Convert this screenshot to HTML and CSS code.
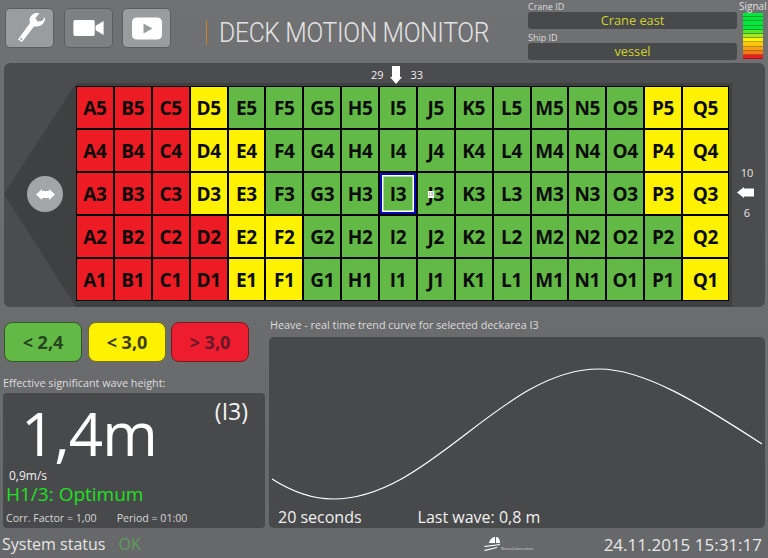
FILE: index.html
```html
<!DOCTYPE html>
<html lang="en">
<head>
    <meta charset="UTF-8">
    <title>Deck Motion Monitor</title>
    <link rel="stylesheet" href="styles.css">
</head>
<body>

    <header class="header">
        <div class="tool-buttons">
            <div class="tool-button">
                <svg width="36" height="36" viewBox="0 0 36 36"><path d="M10 32 L6 29.5 L18 13 C16.5 8.5 19 4 24 3 L27.5 3.2 L23.5 8 L25.5 11.5 L30 11 L33 7 C33.5 12 30 16.5 24.5 16.5 L22 16.5 Z" fill="#fff"/><circle cx="9.3" cy="29" r="1" fill="#9b9c9e"/></svg>
            </div>
            <div class="tool-button dark">
                <svg width="31" height="16" viewBox="1 2 34 18"><path d="M3 2 H23 Q25 2 25 4 V18 Q25 20 23 20 H3 Q1 20 1 18 V4 Q1 2 3 2 Z M26 8.5 L35 3 V19 L26 13.5 Z" fill="#fff"/></svg>
            </div>
            <div class="tool-button">
                <svg width="30" height="23" viewBox="1 1 30 22"><path fill-rule="evenodd" d="M6 1 H26 Q31 1 31 6 V18 Q31 23 26 23 H6 Q1 23 1 18 V6 Q1 1 6 1 Z M12.5 7 V17 L21.5 12 Z" fill="#fff"/></svg>
            </div>
        </div>
        <h1 class="title"><span class="title-text">DECK MOTION MONITOR</span></h1>
        <div class="ids">
            <div class="id-label">Crane ID</div>
            <div class="id-value">Crane east</div>
            <div class="id-label">Ship ID</div>
            <div class="id-value">vessel</div>
        </div>
        <div class="signal">
            <div class="signal-label">Signal</div>
            <div class="signal-bar">
                <span class="s1"></span><span class="s1"></span><span class="s1"></span><span class="s1"></span>
                <span class="s2"></span><span class="s3"></span><span class="s4"></span><span class="s5"></span>
                <span class="s6"></span><span class="s7"></span><span class="s8"></span>
            </div>
        </div>
    </header>

    <section class="board">
        <svg class="board-shape" width="730" height="244" viewBox="0 0 730 244"><path d="M0 131 L72 20 H728 V244 H72 Z" fill="#3f4042"/></svg>
        <div class="flip-col">
            <div class="flip-button">
                <svg width="19" height="11" viewBox="0 0 19 11"><path d="M0 5.5 L6 0 V2 H13 V0 L19 5.5 L13 11 V9 H6 V11 Z" fill="#fff"/></svg>
            </div>
        </div>
        <div class="deck-col">
            <div class="top-marker">
                <span>29</span>
                <svg width="12" height="18" viewBox="0 0 12 18"><path d="M2 0 H10 V11 H12 L6 18 L0 11 H2 Z" fill="#fff"/></svg>
                <span class="top-marker-end">33</span>
            </div>
            <div class="deck">
                <div class="cell r">A5</div><div class="cell r">B5</div><div class="cell r">C5</div><div class="cell y">D5</div><div class="cell g">E5</div><div class="cell g">F5</div><div class="cell g">G5</div><div class="cell g">H5</div><div class="cell g">I5</div><div class="cell g">J5</div><div class="cell g">K5</div><div class="cell g">L5</div><div class="cell g">M5</div><div class="cell g">N5</div><div class="cell g">O5</div><div class="cell y">P5</div><div class="cell y">Q5</div>
                <div class="cell r">A4</div><div class="cell r">B4</div><div class="cell r">C4</div><div class="cell y">D4</div><div class="cell y">E4</div><div class="cell g">F4</div><div class="cell g">G4</div><div class="cell g">H4</div><div class="cell g">I4</div><div class="cell g">J4</div><div class="cell g">K4</div><div class="cell g">L4</div><div class="cell g">M4</div><div class="cell g">N4</div><div class="cell g">O4</div><div class="cell y">P4</div><div class="cell y">Q4</div>
                <div class="cell r">A3</div><div class="cell r">B3</div><div class="cell r">C3</div><div class="cell y">D3</div><div class="cell y">E3</div><div class="cell g">F3</div><div class="cell g">G3</div><div class="cell g">H3</div><div class="cell g selected">I3</div><div class="cell g">J3<span class="chip">I3</span></div><div class="cell g">K3</div><div class="cell g">L3</div><div class="cell g">M3</div><div class="cell g">N3</div><div class="cell g">O3</div><div class="cell y">P3</div><div class="cell y">Q3</div>
                <div class="cell r">A2</div><div class="cell r">B2</div><div class="cell r">C2</div><div class="cell r">D2</div><div class="cell y">E2</div><div class="cell y">F2</div><div class="cell g">G2</div><div class="cell g">H2</div><div class="cell g">I2</div><div class="cell g">J2</div><div class="cell g">K2</div><div class="cell g">L2</div><div class="cell g">M2</div><div class="cell g">N2</div><div class="cell g">O2</div><div class="cell g">P2</div><div class="cell y">Q2</div>
                <div class="cell r">A1</div><div class="cell r">B1</div><div class="cell r">C1</div><div class="cell r">D1</div><div class="cell y">E1</div><div class="cell y">F1</div><div class="cell g">G1</div><div class="cell g">H1</div><div class="cell g">I1</div><div class="cell g">J1</div><div class="cell g">K1</div><div class="cell g">L1</div><div class="cell g">M1</div><div class="cell g">N1</div><div class="cell g">O1</div><div class="cell g">P1</div><div class="cell y">Q1</div>
            </div>
        </div>
        <div class="side-marker">
            <span>10</span>
            <svg class="side-arrow" width="17" height="11" viewBox="0 0 17 11"><path d="M0 5.5 L7 0 V1.5 H17 V9.5 H7 V11 Z" fill="#fff"/></svg>
            <span>6</span>
        </div>
    </section>

    <main class="lower">
        <div class="left-col">
            <div class="legend">
                <div class="legend-item green">&lt; 2,4</div>
                <div class="legend-item yellow">&lt; 3,0</div>
                <div class="legend-item red">&gt; 3,0</div>
            </div>
            <div class="caption wave-caption">Effective significant wave height:</div>
            <div class="wave-panel">
                <div class="wave-top">
                    <div class="wave-value">1,4m</div>
                    <div class="wave-area">(I3)</div>
                </div>
                <div class="wave-speed">0,9m/s</div>
                <div class="wave-state">H1/3: Optimum</div>
                <div class="wave-foot">
                    <span>Corr. Factor = 1,00</span>
                    <span>Period = 01:00</span>
                </div>
            </div>
        </div>
        <div class="right-col">
            <div class="caption chart-caption">Heave - real time trend curve for selected deckarea I3</div>
            <div class="chart">
                <svg class="chart-line" width="496" height="191" viewBox="0 0 496 191"><path d="M3 142 C22 154 42 162 64 162 C161 162 233 32 330 32 C375 32 430 66 493 107" fill="none" stroke="#fff" stroke-width="1.2"/></svg>
                <div class="chart-foot">
                    <span>20 seconds</span>
                    <span>Last wave: 0,8 m</span>
                </div>
            </div>
        </div>
    </main>

    <footer class="footer">
        <div class="status">System status <span class="status-ok">OK</span></div>
        <div class="logo">
            <svg width="17" height="16" viewBox="0 0 17 16"><path d="M5 7 C6 3 9 1 11 1 V7 Z M12 1 C15 1 16 4 16 7 H12 Z M0 10 L16 8 L16 9 L1 11 Z M0 14 L13 11 L13 12 L1 15 Z" fill="#fff"/></svg>
            <span>ShoreConnection</span>
        </div>
        <div class="clock">24.11.2015 15:31:17</div>
    </footer>

</body>
</html>
```

FILE: styles.css
```css
html, body {
    margin: 0;
    padding: 0;
}

body {
    width: 768px;
    height: 558px;
    overflow: hidden;
    font-family: 'Open Sans', sans-serif;
    color: #e6e6e6;
    background: linear-gradient(#707173, #67686a);
    display: flex;
    flex-direction: column;
}

/* header */
.header {
    height: 63px;
    display: flex;
    align-items: flex-start;
}

.tool-buttons {
    display: flex;
    gap: 9.5px;
    padding: 8px 0 0 5px;
    width: 201px;
    box-sizing: border-box;
}

.tool-button {
    width: 49px;
    height: 40px;
    background-color: #9b9c9e;
    border: 1px solid #5c5d5f;
    border-radius: 5px;
    box-sizing: border-box;
    display: flex;
    align-items: center;
    justify-content: center;
}

.tool-button.dark {
    background-color: #7f8082;
}

.title {
    margin: 20px 0 0 5px;
    padding-left: 12px;
    width: 304px;
    height: 25px;
    box-sizing: border-box;
    border-left: 1px solid #c8812f;
    font-family: 'Roboto', sans-serif;
    font-weight: 300;
    font-size: 28px;
    line-height: 25px;
    letter-spacing: -0.4px;
    color: #e4e4e4;
    white-space: nowrap;
}

.title-text {
    display: inline-block;
    transform: scaleX(0.885);
    transform-origin: left center;
}

.ids {
    width: 209px;
    margin-left: 18px;
    padding-top: 1px;
    flex-shrink: 0;
}

.id-label {
    font-size: 9px;
    line-height: 11px;
    color: #dcdcdc;
}

.id-value {
    height: 17px;
    line-height: 17px;
    margin-bottom: 3px;
    background-color: #48494b;
    border-radius: 3px;
    text-align: center;
    font-size: 12.8px;
    color: #d0d22c;
}

.signal {
    margin-left: 2px;
    width: 26px;
    flex-shrink: 0;
}

.signal-label {
    font-size: 10px;
    line-height: 12px;
    text-align: center;
    color: #e0e0e0;
}

.signal-bar {
    margin: 1px 2px 0 4px;
    display: flex;
    flex-direction: column;
    height: 46px;
}

.signal-bar span {
    flex: 1;
    border-bottom: 1px solid rgba(0, 0, 0, 0.3);
}

.s1 { background-color: #00e83c; }
.s2 { background-color: #55e62a; }
.s3 { background-color: #a8e61e; }
.s4 { background-color: #fff200; }
.s5 { background-color: #fdc60e; }
.s6 { background-color: #fb9e14; }
.s7 { background-color: #f67a18; }
.s8 { background-color: #ee1c24; }

/* deck board */
.board {
    position: relative;
    height: 244px;
    margin: 0 3px 0 4px;
    background-color: #4b4c4e;
    border-radius: 6px;
    display: flex;
    overflow: hidden;
}

.board-shape {
    position: absolute;
    left: 0;
    top: 0;
}

.flip-col {
    position: relative;
    width: 72px;
    padding: 113px 0 0 23px;
    box-sizing: border-box;
}

.flip-button {
    width: 36px;
    height: 36px;
    border-radius: 50%;
    background-color: #a4a5a8;
    display: flex;
    align-items: center;
    justify-content: center;
}

.deck-col {
    position: relative;
    width: 653px;
    display: flex;
    flex-direction: column;
}

.top-marker {
    height: 23px;
    padding-right: 11px;
    display: flex;
    align-items: center;
    justify-content: center;
    gap: 6px;
    font-size: 11px;
    color: #f0f0f0;
}

.top-marker-end {
    margin-left: 3px;
}

.deck {
    width: 653px;
    height: 215px;
    padding: 1px;
    box-sizing: border-box;
    background-color: #000;
    display: grid;
    grid-template-columns: repeat(16, 1fr) 45px;
    grid-template-rows: repeat(5, 1fr);
    gap: 2px;
}

.cell {
    position: relative;
    display: flex;
    align-items: center;
    justify-content: center;
    font-weight: 700;
    font-size: 19px;
    letter-spacing: -0.3px;
    color: #0b0b0b;
}

.cell.r { background-color: #ed1c24; }
.cell.y { background-color: #fff200; }
.cell.g { background-color: #62b945; }

.cell.selected {
    z-index: 1;
    box-sizing: border-box;
    border: 2px solid #0a0ab4;
    box-shadow: inset 0 0 0 1.5px #fff;
}

.chip {
    position: absolute;
    left: 10px;
    top: 18px;
    width: 6px;
    height: 7px;
    background-color: #fff;
    font-size: 5px;
    font-weight: 400;
    line-height: 7px;
    letter-spacing: 0;
    text-align: center;
    color: #555;
}

.side-marker {
    position: relative;
    flex: 1;
    padding-top: 102px;
    display: flex;
    flex-direction: column;
    align-items: center;
    font-size: 11px;
    line-height: 15px;
    gap: 7px;
    color: #e8e8e8;
}

.side-arrow {
    margin-right: 4px;
}

/* lower part */
.lower {
    flex: 1;
    display: flex;
    padding-left: 3px;
}

.left-col {
    width: 262px;
}

.legend {
    display: flex;
    gap: 6px;
    padding: 15px 0 0 1px;
}

.legend-item {
    width: 78px;
    height: 40px;
    box-sizing: border-box;
    border-radius: 8px;
    display: flex;
    align-items: center;
    justify-content: center;
    font-weight: 700;
    font-size: 18px;
}

.legend-item.green {
    background-color: #62b945;
    border: 1px solid #2f5a22;
    color: #27461f;
}

.legend-item.yellow {
    background-color: #fff200;
    border: 1px solid #75701a;
    margin-right: -1px;
    color: #3f3d14;
}

.legend-item.red {
    background-color: #ed1c2e;
    border: 1px solid #7a1a20;
    color: #641a26;
}

.caption {
    font-size: 10.8px;
    line-height: 14px;
    color: #dedede;
}

.wave-caption {
    margin-top: 14px;
    height: 17px;
}

.wave-panel {
    height: 135px;
    box-sizing: border-box;
    background-color: #48494b;
    border-radius: 4px;
    padding: 0 3px;
}

.wave-top {
    height: 73px;
    display: flex;
    justify-content: space-between;
    align-items: flex-start;
}

.wave-value {
    margin: 7px 0 0 15px;
    font-size: 60px;
    line-height: 66px;
    letter-spacing: -1px;
    white-space: nowrap;
    color: #fff;
}

.wave-area {
    margin: 2px 14px 0 0;
    font-size: 23px;
    line-height: 32px;
    color: #f4f4f4;
}

.wave-speed {
    margin: 3px 0 0 3px;
    font-size: 12px;
    line-height: 13px;
    color: #f0f0f0;
}

.wave-state {
    margin-top: 1px;
    font-size: 19px;
    line-height: 22px;
    color: #1fe11f;
}

.wave-foot {
    margin-top: 6px;
    display: flex;
    gap: 20px;
    font-size: 10.6px;
    line-height: 14px;
    color: #d8d8d8;
}

.right-col {
    margin-left: 4px;
    width: 496px;
}

.chart-caption {
    padding: 11px 0 0 1px;
    height: 19px;
    white-space: nowrap;
    color: #dcdcdc;
}

.chart {
    position: relative;
    height: 191px;
    background-color: #48494b;
    border-radius: 5px;
}

.chart-line {
    position: absolute;
    left: 0;
    top: 0;
}

.chart-foot {
    position: absolute;
    left: 9px;
    bottom: 1px;
    display: flex;
    gap: 56px;
    font-size: 16px;
    line-height: 20px;
    color: #f2f2f2;
}

/* footer */
.footer {
    height: 28px;
    display: flex;
    align-items: center;
    padding: 0 6px 0 2px;
}

.status {
    width: 482px;
    flex-shrink: 0;
    font-size: 16px;
    white-space: nowrap;
    color: #e6e6e6;
}

.status-ok {
    margin-left: 9px;
    color: #5f9c5f;
}

.logo {
    display: flex;
    align-items: flex-end;
    flex: 1;
    font-size: 4px;
    line-height: 6px;
    color: #ddd;
}

.clock {
    flex-shrink: 0;
    font-size: 17px;
    white-space: nowrap;
    color: #e8e8e8;
}
```
